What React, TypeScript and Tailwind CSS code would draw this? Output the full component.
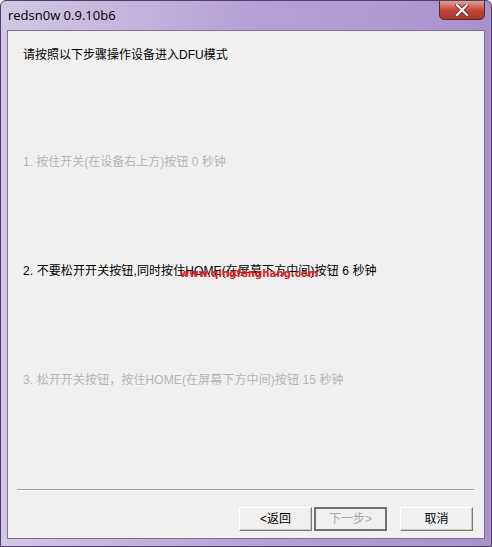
import React from "react";

const CJK = '"Liberation Sans", "Noto Sans CJK SC", sans-serif';

function Btn({ label, kind }: { label: string; kind?: "default" }) {
  if (kind === "default") {
    return (
      <div className="w-[73px] h-[24px] flex items-center justify-center border-2 border-[#707070] bg-[#f0f0f0] text-[12px] text-[#a8a8a8]">
        {label}
      </div>
    );
  }
  return (
    <div className="w-[73px] h-[24px] flex items-center justify-center border border-t-white border-l-white border-b-[#7a7a7a] border-r-[#7a7a7a] bg-[#f0f0f0] shadow-[inset_-1px_-1px_0_#c8c8c8] text-[12px] text-black">
      {label}
    </div>
  );
}

export default function App() {
  return (
    <div
      className="relative w-[492px] h-[547px] overflow-hidden rounded-t-[6px] border border-[#4e3f6c] bg-gradient-to-r from-[#d2c8e4] via-[#b6a2d6] to-[#a992cc] flex flex-col"
      style={{ fontFamily: CJK }}
    >
      {/* title bar */}
      <div className="h-[29px] flex items-center pl-[7px] text-[13px] text-black shrink-0" style={{ fontFamily: '"Open Sans", "Liberation Sans", sans-serif' }}>
        redsn0w 0.9.10b6
      </div>

      {/* close button */}
      <div className="absolute top-[-1px] right-[6px] w-[46px] h-[20px] rounded-b-[5px] border border-[#5b2a2a] bg-gradient-to-b from-[#e3a093] via-[#c4463a] to-[#a8352a] flex items-center justify-center">
        <svg width="14" height="12" viewBox="0 0 14 12">
          <path d="M2 1 L12 11 M12 1 L2 11" stroke="#5a2020" strokeWidth="4" strokeLinecap="square" />
          <path d="M2 1 L12 11 M12 1 L2 11" stroke="#f4f0f0" strokeWidth="2.4" strokeLinecap="square" />
        </svg>
      </div>

      {/* client area */}
      <div className="mx-[6px] mb-[7px] flex-1 border border-[#7d6f98] bg-[#f0f0f0] flex flex-col">
        <div className="flex-1 flex flex-col px-[15px] pt-[16px] text-[12px] leading-[16px]">
          <div className="text-black">请按照以下步骤操作设备进入DFU模式</div>
          <div className="mt-[91px] text-[#b5b5b5]">1. 按住开关(在设备右上方)按钮 0 秒钟</div>
          <div className="relative mt-[93px] text-black tracking-[0.1px]">
            2. 不要松开开关按钮,同时按住HOME(在屏幕下方中间)按钮 6 秒钟
            <span
              className="absolute left-[157px] top-[5px] text-[10px] leading-[12px] font-bold text-[#e0201c]"
              style={{ fontFamily: '"DejaVu Sans", sans-serif' }}
            >
              www.qingfenghang.com
            </span>
          </div>
          <div className="mt-[93px] text-[#b5b5b5] tracking-[0.1px]">3. 松开开关按钮，按住HOME(在屏幕下方中间)按钮 15 秒钟</div>
        </div>

        {/* separator + buttons */}
        <div className="ml-[9px] mr-[10px] border-t border-t-[#a0a0a0] border-b border-b-white" />
        <div className="h-[47px] flex items-start justify-end pt-[16px] pr-[11px]">
          <Btn label="<返回" />
          <div className="w-[2px]" />
          <Btn label="下一步>" kind="default" />
          <div className="w-[13px]" />
          <Btn label="取消" />
        </div>
      </div>
    </div>
  );
}
